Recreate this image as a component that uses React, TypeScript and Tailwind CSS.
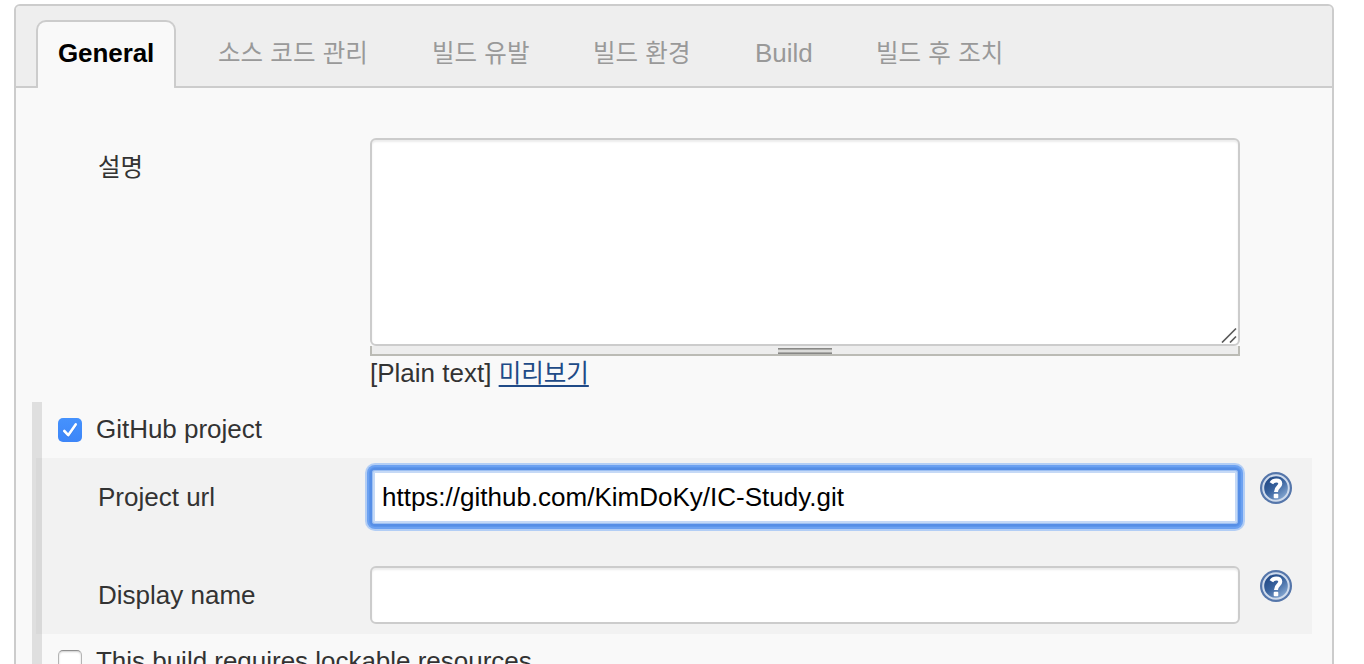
import React from "react";

const tabs = [
  { label: "소스 코드 관리", width: "w-[194px]" },
  { label: "빌드 유발", width: "w-[141px]" },
  { label: "빌드 환경", width: "w-[142px]" },
  { label: "Build", width: "w-[101px]" },
  { label: "빌드 후 조치", width: "w-[170px]" },
];

function Ko({ children }: { children: React.ReactNode }) {
  return <span className="text-[24.5px] font-normal [word-spacing:0.45px]">{children}</span>;
}

function HelpIcon({ id }: { id: string }) {
  return (
    <svg width="32" height="32" viewBox="0 0 32 32" className="block shrink-0">
      <defs>
        <linearGradient id={id} x1="0.15" y1="0.1" x2="0.85" y2="0.95">
          <stop offset="0" stopColor="#1f4683" />
          <stop offset="0.45" stopColor="#3a649f" />
          <stop offset="1" stopColor="#8fb0d8" />
        </linearGradient>
      </defs>
      <circle cx="16" cy="16" r="16" fill="#5576aa" />
      <circle cx="16" cy="16" r="12.8" fill={`url(#${id})`} stroke="#cfdbec" strokeWidth="2" />
      <path
        d="M11.4 11.2C12.6 8.9 14.3 8.4 16.2 8.4C18.8 8.4 20.3 9.7 20.3 11.8C20.3 14.9 16 14.8 16 20"
        fill="none"
        stroke="#fff"
        strokeWidth="4"
      />
      <rect x="13.7" y="21.8" width="4.6" height="4.4" rx="1" fill="#fff" />
    </svg>
  );
}

function CheckRow({ label, checked }: { label: string; checked?: boolean }) {
  return (
    <div className="flex h-14 items-start pt-3 pl-[26px]">
      {checked ? (
        <span className="mt-1 flex size-6 shrink-0 items-center justify-center rounded-[5px] bg-linear-to-b from-[#4592fd] to-[#3d86f8]">
          <svg width="24" height="24" viewBox="0 0 24 24" fill="none">
            <path d="M6.3 13L10.2 17.2L17.7 6.4" stroke="#2c6cd6" strokeOpacity="0.5" strokeWidth="2.6" strokeLinecap="round" strokeLinejoin="round" transform="translate(0 1)" />
            <path d="M6.3 13L10.2 17.2L17.7 6.4" stroke="#fff" strokeWidth="2.6" strokeLinecap="round" strokeLinejoin="round" />
          </svg>
        </span>
      ) : (
        <span className="mt-1 size-6 shrink-0 rounded-[5px] border border-[#b4b4b4] border-t-[#8f8f8f] bg-white shadow-[inset_0_1px_2px_rgba(0,0,0,0.2)]" />
      )}
      <span className="ml-3.5 tracking-[-0.02px]">{label}</span>
    </div>
  );
}

export default function App() {
  return (
    <div className="h-[664px] overflow-hidden bg-white pt-1 pr-[30px] pl-[14px] font-['Liberation_Sans','Noto_Sans_CJK_KR',sans-serif] text-[26px] leading-[30px] whitespace-nowrap text-[#333]">
      <div className="h-[720px] rounded-t-[6px] border-2 border-[#ccc] bg-[#f9f9f9]">
        <div className="flex h-[82px] rounded-t-[4px] border-b-2 border-[#ccc] bg-[#eee] pt-3.5 pl-5 text-[#999]">
          <div className="mr-5 h-[68px] w-[140px] rounded-t-[10px] rounded-b-[2px] border-2 border-b-0 border-[#ccc] bg-[#f9f9f9] pt-4 pl-5 font-bold tracking-[-0.1px] text-black">
            General
          </div>
          {tabs.map((tab) => (
            <div key={tab.label} className={`mr-5 pt-[18px] pl-[22px] ${tab.width}`}>
              {tab.label === "Build" ? tab.label : <Ko>{tab.label}</Ko>}
            </div>
          ))}
        </div>

        <div className="flex h-[314px] pt-[50px] pl-[82px]">
          <div className="w-[272px] pt-[14px]">
            <Ko>설명</Ko>
          </div>
          <div className="w-[870px]">
            <div className="flex h-[208px] items-end justify-end rounded-[6px] border-2 border-[#ccc] bg-white pr-px pb-px shadow-[inset_0_2px_2px_rgba(0,0,0,0.08)]">
              <svg width="16" height="16" viewBox="0 0 16 16" fill="none">
                <path d="M1 15.5L15 1.5M9 15.5L15 9.5" stroke="#5a5a5a" strokeWidth="1.7" />
              </svg>
            </div>
            <div className="flex h-2.5 justify-center border-x-2 border-b-2 border-[#bbbbb5] bg-[#ededed] pt-0.5">
              <div className="h-1.5 w-[54px] border-y border-[#888886] bg-[#dcdcda] shadow-[inset_0_1px_0_#aaaaa8,inset_0_-1px_0_#aaaaa8]" />
            </div>
            <div className="pt-0.5">
              [Plain text]{" "}
              <a href="#" className="text-[#204a87] underline decoration-2 underline-offset-[3px]">
                <Ko>미리보기</Ko>
              </a>
            </div>
          </div>
        </div>

        <div className="relative ml-4">
          <CheckRow label="GitHub project" checked />
          <div className="ml-1 h-44 w-[1276px] bg-[#f2f2f2] pl-[62px]">
            <div className="flex h-[98px] pt-2.5">
              <label className="w-[272px] pt-3.5">Project url</label>
              <div className="flex h-[58px] w-[870px] items-center rounded-[5px] border-2 border-[#568ee6] bg-white pl-2.5 text-black shadow-[inset_0_0_0_1px_#9cbff2,inset_0_0_0_3px_#c5d9f6,0_0_0_1px_#5b95ea,0_0_0_3px_#6ca1f1,0_0_0_5px_#b3cef5]">
                https://github.com/KimDoKy/IC-Study.git
              </div>
              <div className="ml-5 pt-1">
                <HelpIcon id="help-url" />
              </div>
            </div>
            <div className="flex pt-2.5">
              <label className="w-[272px] pt-3.5">Display name</label>
              <div className="h-[58px] w-[870px] rounded-[6px] border-2 border-[#ccc] bg-white shadow-[inset_0_2px_2px_rgba(0,0,0,0.08)]" />
              <div className="ml-5 pt-1">
                <HelpIcon id="help-name" />
              </div>
            </div>
          </div>
          <CheckRow label="This build requires lockable resources" />
          <div className="absolute inset-y-0 left-0 w-2.5 bg-black/10" />
        </div>
      </div>
    </div>
  );
}
